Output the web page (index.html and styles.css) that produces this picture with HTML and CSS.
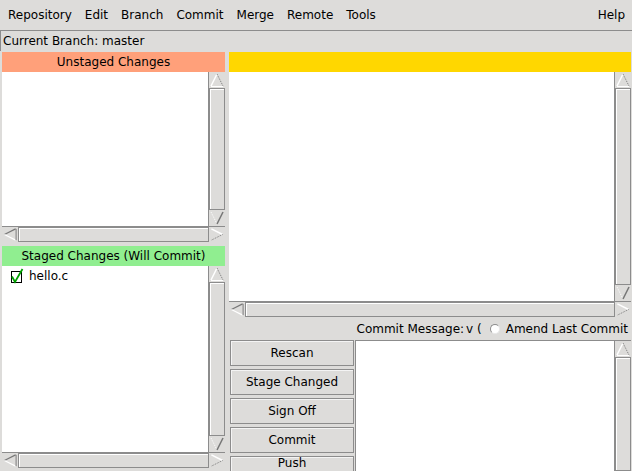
FILE: index.html
```html
<!DOCTYPE html>
<html>
<head>
<meta charset="utf-8">
<link rel="stylesheet" href="styles.css">
</head>
<body>
<div class="app">
  <div class="menubar">
    <span class="mi">Repository</span>
    <span class="mi">Edit</span>
    <span class="mi">Branch</span>
    <span class="mi">Commit</span>
    <span class="mi">Merge</span>
    <span class="mi">Remote</span>
    <span class="mi">Tools</span>
    <span class="mi help">Help</span>
  </div>
  <div class="branchbar">Current Branch: master</div>
  <div class="main">
    <div class="left">
      <div class="pane top">
        <div class="hdr unstaged">Unstaged Changes</div>
        <div class="listrow">
          <div class="list"></div>
          <div class="vscroll">
            <svg class="arrow" viewBox="0 0 16 16"><polyline points="2,14 8,2" stroke="#fff" stroke-width="1.5" fill="none"/><polyline points="8,2 14,14" stroke="#777" stroke-dasharray="1 1" fill="none"/><line x1="2" y1="14.5" x2="14" y2="14.5" stroke="#fff"/></svg>
            <div class="thumb"></div>
            <svg class="arrow" viewBox="0 0 16 16"><polyline points="2,2 8,14" stroke="#fff" stroke-dasharray="1 1" fill="none"/><polyline points="8,14 14,2" stroke="#777" stroke-width="1.5" fill="none"/></svg>
          </div>
        </div>
        <div class="hscroll">
          <svg class="arrow" viewBox="0 0 16 16"><polyline points="14,2 2,8" stroke="#777" stroke-width="1.2" fill="none"/><polyline points="2,8 14,14" stroke="#fff" stroke-width="1.2" fill="none"/><line x1="14.5" y1="2" x2="14.5" y2="14" stroke="#777"/></svg>
          <div class="thumb"></div>
          <svg class="arrow" viewBox="0 0 16 16"><polyline points="2,2 14,8" stroke="#fff" stroke-width="1.5" fill="none"/><polyline points="14,8 2,14" stroke="#777" stroke-dasharray="1 1" fill="none"/></svg>
        </div>
      </div>
      <div class="pane bottom">
        <div class="hdr staged">Staged Changes (Will Commit)</div>
        <div class="listrow">
          <div class="list">
            <div class="item">
              <svg class="chk" viewBox="0 0 14 16"><rect x="1.5" y="3.5" width="10" height="11" fill="#fff" stroke="#000"/><polyline points="2,8.5 5,14 12.5,1" stroke="#00a000" stroke-width="1.8" fill="none"/></svg>
              <span>hello.c</span>
            </div>
          </div>
          <div class="vscroll">
            <svg class="arrow" viewBox="0 0 16 16"><polyline points="2,14 8,2" stroke="#fff" stroke-width="1.5" fill="none"/><polyline points="8,2 14,14" stroke="#777" stroke-dasharray="1 1" fill="none"/><line x1="2" y1="14.5" x2="14" y2="14.5" stroke="#fff"/></svg>
            <div class="thumb"></div>
            <svg class="arrow" viewBox="0 0 16 16"><polyline points="2,2 8,14" stroke="#fff" stroke-dasharray="1 1" fill="none"/><polyline points="8,14 14,2" stroke="#777" stroke-width="1.5" fill="none"/></svg>
          </div>
        </div>
        <div class="hscroll">
          <svg class="arrow" viewBox="0 0 16 16"><polyline points="14,2 2,8" stroke="#777" stroke-width="1.2" fill="none"/><polyline points="2,8 14,14" stroke="#fff" stroke-width="1.2" fill="none"/><line x1="14.5" y1="2" x2="14.5" y2="14" stroke="#777"/></svg>
          <div class="thumb"></div>
          <svg class="arrow" viewBox="0 0 16 16"><polyline points="2,2 14,8" stroke="#fff" stroke-width="1.5" fill="none"/><polyline points="14,8 2,14" stroke="#777" stroke-dasharray="1 1" fill="none"/></svg>
        </div>
      </div>
    </div>
    <div class="right">
      <div class="diffpane">
        <div class="hdr diffhdr"></div>
        <div class="listrow">
          <div class="list"></div>
          <div class="vscroll">
            <svg class="arrow" viewBox="0 0 16 16"><polyline points="2,14 8,2" stroke="#fff" stroke-width="1.5" fill="none"/><polyline points="8,2 14,14" stroke="#777" stroke-dasharray="1 1" fill="none"/><line x1="2" y1="14.5" x2="14" y2="14.5" stroke="#fff"/></svg>
            <div class="thumb"></div>
            <svg class="arrow" viewBox="0 0 16 16"><polyline points="2,2 8,14" stroke="#fff" stroke-dasharray="1 1" fill="none"/><polyline points="8,14 14,2" stroke="#777" stroke-width="1.5" fill="none"/></svg>
          </div>
        </div>
        <div class="hscroll">
          <svg class="arrow" viewBox="0 0 16 16"><polyline points="14,2 2,8" stroke="#777" stroke-width="1.2" fill="none"/><polyline points="2,8 14,14" stroke="#fff" stroke-width="1.2" fill="none"/><line x1="14.5" y1="2" x2="14.5" y2="14" stroke="#777"/></svg>
          <div class="thumb"></div>
          <svg class="arrow" viewBox="0 0 16 16"><polyline points="2,2 14,8" stroke="#fff" stroke-width="1.5" fill="none"/><polyline points="14,8 2,14" stroke="#777" stroke-dasharray="1 1" fill="none"/></svg>
        </div>
      </div>
      <div class="commitbar">
        <span>Commit Message:</span>
        <span class="cut">v (</span>
        <span class="radio"></span>
        <span>Amend Last Commit</span>
      </div>
      <div class="commitbody">
        <div class="buttons">
          <div class="btn">Rescan</div>
          <div class="btn">Stage Changed</div>
          <div class="btn">Sign Off</div>
          <div class="btn">Commit</div>
          <div class="btn push">Push</div>
        </div>
        <div class="msg">
          <div class="msgtext"></div>
          <div class="vscroll">
            <svg class="arrow" viewBox="0 0 16 16"><polyline points="2,14 8,2" stroke="#fff" stroke-width="1.5" fill="none"/><polyline points="8,2 14,14" stroke="#777" stroke-dasharray="1 1" fill="none"/><line x1="2" y1="14.5" x2="14" y2="14.5" stroke="#fff"/></svg>
            <div class="thumb"></div>
          </div>
        </div>
      </div>
    </div>
  </div>
</div>
</body>
</html>
```
FILE: styles.css
```css
* { box-sizing: border-box; }
html, body { margin: 0; padding: 0; }
body {
  width: 632px;
  height: 471px;
  overflow: hidden;
  background: #dddcda;
  font: 12px "DejaVu Sans", sans-serif;
  color: #000;
}
.app { display: flex; flex-direction: column; height: 471px; }

.menubar {
  flex: none;
  height: 30px;
  display: flex;
  align-items: center;
  padding: 0 2px 1px 2px;
}
.mi { padding: 0 7px 0 6px; line-height: 20px; white-space: nowrap; }
.mi.help { margin-left: auto; padding-right: 5px; }

.branchbar {
  flex: none;
  height: 21px;
  border-top: 1px solid #8c8c8c;
  border-left: 1px solid #8c8c8c;
  padding: 1px 0 0 2px;
  line-height: 19px;
}

.main {
  flex: 1;
  min-height: 0;
  display: flex;
  gap: 4px;
  padding: 1px 1px 0 2px;
}
.left {
  width: 223px;
  flex: none;
  display: flex;
  flex-direction: column;
  gap: 4px;
  padding-bottom: 3px;
}
.right {
  flex: 1;
  min-width: 0;
  display: flex;
  flex-direction: column;
}
.pane { display: flex; flex-direction: column; }
.pane.top { height: 190px; flex: none; }
.pane.bottom { flex: 1; min-height: 0; }

.hdr {
  flex: none;
  height: 20px;
  line-height: 20px;
  text-align: center;
  white-space: nowrap;
}
.unstaged { background: #ffa07a; }
.staged { background: #90ee90; }
.diffhdr { background: #ffd700; }

.listrow { flex: 1; min-height: 0; display: flex; }
.list { flex: 1; background: #fff; min-width: 0; }

.vscroll {
  width: 17px;
  flex: none;
  display: flex;
  flex-direction: column;
  border-left: 1px solid #8c8c8c;
  background: #dddcda;
}
.hscroll {
  height: 16px;
  flex: none;
  display: flex;
  border-top: 1px solid #8c8c8c;
  background: #dddcda;
}
.arrow { width: 16px; height: 16px; flex: none; display: block; }
.hscroll .arrow { height: 15px; }
.thumb {
  flex: 1;
  border: 1px solid #8c8c8c;
  box-shadow: inset 1px 1px #fff;
  background: #dddcda;
}

.item {
  display: flex;
  align-items: center;
  gap: 5px;
  padding: 1px 0 0 8px;
  height: 19px;
}
.chk { width: 14px; height: 16px; display: block; }

.diffpane { height: 265px; flex: none; display: flex; flex-direction: column; }

.commitbar {
  flex: none;
  height: 23px;
  display: flex;
  align-items: center;
  justify-content: flex-end;
  padding-right: 3px;
  white-space: nowrap;
}
.cut { margin-left: 2px; }
.radio {
  width: 10px;
  height: 10px;
  border-radius: 50%;
  background: #fff;
  border: 1px solid;
  border-color: #8c8c8c #e8e8e8 #e8e8e8 #8c8c8c;
  margin: 0 6px 0 8px;
}

.commitbody { flex: 1; min-height: 0; display: flex; gap: 1px; }
.buttons {
  width: 124px;
  flex: none;
  margin-left: 1px;
  display: flex;
  flex-direction: column;
  gap: 3px;
}
.btn {
  flex: none;
  height: 26px;
  line-height: 24px;
  text-align: center;
  border: 1px solid #8c8c8c;
  box-shadow: inset 1px 1px #f4f4f4;
  background: #dddcda;
}
.btn.push {
  height: 15px;
  line-height: 12px;
  border-bottom: none;
}
.msg { flex: 1; display: flex; min-width: 0; }
.msgtext {
  flex: 1;
  background: #fff;
  border-top: 1px solid #8c8c8c;
  border-left: 1px solid #8c8c8c;
}
.msg .vscroll { border-top: 1px solid #8c8c8c; }
```
